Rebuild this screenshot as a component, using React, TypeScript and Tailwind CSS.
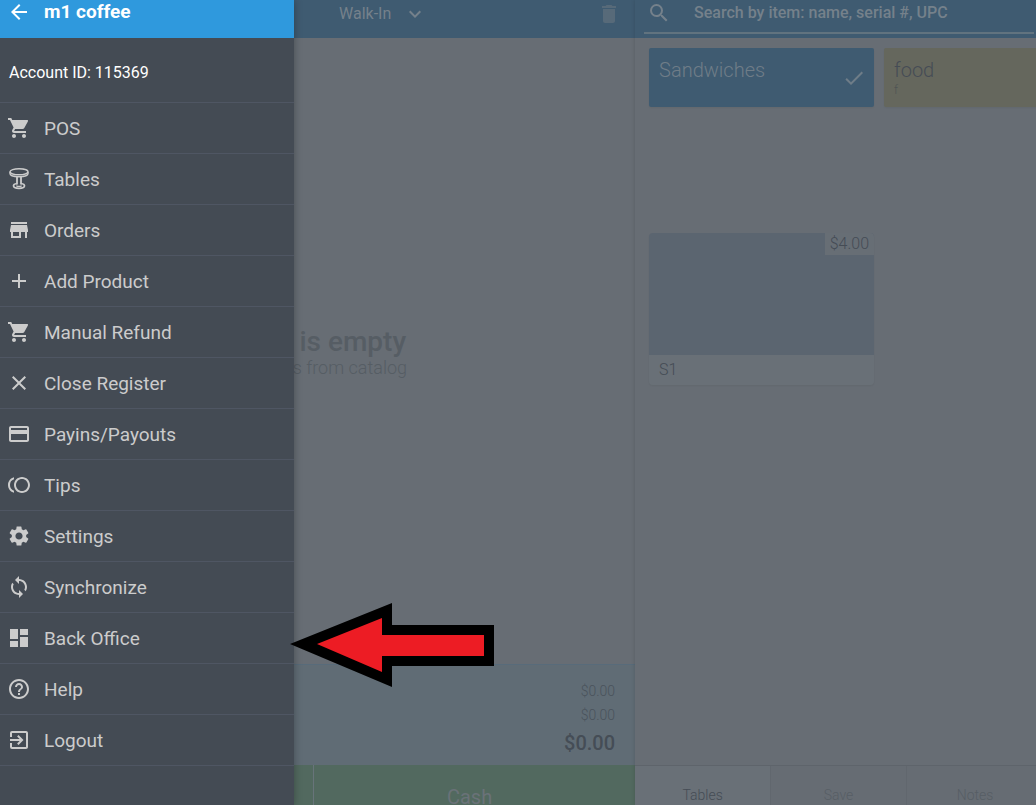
import type { ReactNode } from "react";
import type { IconType } from "react-icons";
import {
  MdAdd,
  MdArrowBack,
  MdCheck,
  MdClose,
  MdCreditCard,
  MdDashboard,
  MdDelete,
  MdExitToApp,
  MdHelpOutline,
  MdKeyboardArrowDown,
  MdSearch,
  MdSettings,
  MdShoppingCart,
  MdStore,
  MdSync,
  MdToll,
} from "react-icons/md";

function TableIcon() {
  return (
    <svg width="24" height="24" viewBox="0 0 24 24" fill="none" stroke="currentColor">
      <ellipse cx="12" cy="4.7" rx="9" ry="3" strokeWidth="1.4" />
      <path d="M3 4.7v2c0 1.700 4 3 9 3s9-1.300 9-3v-2" strokeWidth="1.4" />
      <path d="M10 9.500v8M14 9.500v8" strokeWidth="1.800" />
      <path d="M10 16.500c-2.300.3-3.500 1-3.500 2.300 0 1.500 2.400 2.500 5.500 2.500s5.500-1 5.500-2.500c0-1.300-1.200-2-3.500-2.300" strokeWidth="1.700" />
      <path d="M9.300 18.800c1.600.7 3.800.7 5.400 0" strokeWidth="1.300" />
    </svg>
  );
}

const icon = (Icon: IconType) => <Icon size={24} />;

const menuItems: { label: string; icon: ReactNode }[] = [
  { label: "POS", icon: icon(MdShoppingCart) },
  { label: "Tables", icon: <TableIcon /> },
  { label: "Orders", icon: icon(MdStore) },
  { label: "Add Product", icon: icon(MdAdd) },
  { label: "Manual Refund", icon: icon(MdShoppingCart) },
  { label: "Close Register", icon: icon(MdClose) },
  { label: "Payins/Payouts", icon: icon(MdCreditCard) },
  { label: "Tips", icon: icon(MdToll) },
  { label: "Settings", icon: icon(MdSettings) },
  { label: "Synchronize", icon: icon(MdSync) },
  { label: "Back Office", icon: icon(MdDashboard) },
  { label: "Help", icon: icon(MdHelpOutline) },
  { label: "Logout", icon: icon(MdExitToApp) },
];

function Drawer() {
  return (
    <aside className="absolute inset-y-0 left-0 z-20 w-[294px] bg-[#444b54] shadow-[0_0_8px_rgba(0,0,0,0.3)]">
      <header className="flex h-[38px] items-center bg-[#2f99dd] pb-3.5 pl-[7px] text-white">
        <button aria-label="Back" className="mr-[13px]">
          <MdArrowBack size={24} />
        </button>
        <h1 className="text-[19px] leading-6 font-bold">m1 coffee</h1>
      </header>
      <p className="flex h-[65px] items-center border-b border-[#4f5663] pt-1.5 pl-[9px] text-base text-white">
        Account ID: 115369
      </p>
      <nav>
        {menuItems.map((item) => (
          <a
            key={item.label}
            href="#"
            className="flex h-[51px] items-center gap-[13px] border-b border-[#4f5663] pl-[7px] text-[19px] text-[#cccccc]"
          >
            {item.icon}
            <span className="pt-0.5">{item.label}</span>
          </a>
        ))}
      </nav>
    </aside>
  );
}

function Cart() {
  return (
    <section className="flex w-[61.3%] shrink-0 flex-col">
      <header className="flex h-[38px] items-center justify-between bg-[#3f5b71] pr-3.5 pb-2.5 pl-[339px] text-[#75818b]">
        <button className="flex items-center gap-3 text-base">
          Walk-In
          <MdKeyboardArrowDown size={24} />
        </button>
        <button aria-label="Clear cart" className="text-[#576a79]">
          <MdDelete size={24} />
        </button>
      </header>
      <div className="flex flex-1 flex-col items-center justify-center pt-0.5 pr-1.5 text-[#565d64]">
        <p className="text-[28px] leading-8 font-medium">Order is empty</p>
        <p className="text-lg leading-5 font-light">Add items from catalog</p>
      </div>
      <div className="flex h-[101px] flex-col items-end border-t border-[#586b7a] bg-[#606c75] pt-3.5 pr-5 text-[#4a535c]">
        <p className="text-sm leading-6 font-light">$0.00</p>
        <p className="text-sm leading-6 font-light">$0.00</p>
        <p className="text-xl leading-8 font-medium text-[#454d56]">$0.00</p>
      </div>
      <div className="flex h-10 bg-[#52695f] text-xl text-[#6a7278]">
        <button className="w-[314px] shrink-0 border-r border-[#68747a]" aria-label="Card" />
        <button className="flex flex-1 items-end justify-center pr-2.5 leading-4">Cash</button>
      </div>
    </section>
  );
}

function Catalog() {
  return (
    <section className="z-10 flex min-w-0 flex-1 flex-col overflow-hidden shadow-[0_0_4px_rgba(0,0,0,0.15)]">
      <header className="h-[38px] shrink-0 bg-[#3f5b71] pr-0.5 pl-[9px]">
        <label className="flex h-[34px] items-center gap-[23px] border-b-2 border-[#61737f] pb-1.5 pl-[3px] text-[#75818b]">
          <MdSearch size={24} className="shrink-0" />
          <input
            type="text"
            aria-label="Search"
            placeholder="Search by item: name, serial #, UPC"
            className="min-w-0 flex-1 text-base font-medium outline-none placeholder:text-[#75818b]"
          />
        </label>
      </header>
      <div className="flex-1 bg-[#676d74] pt-2.5 pl-3.5">
        <div className="flex h-[185px] items-start gap-2.5">
          <button className="flex h-[59px] w-[225px] shrink-0 items-center justify-between rounded-xs bg-[#3f5b71] pr-2 pl-2.5 text-left text-[#6f7d88] shadow-xs">
            <span className="self-start pt-2 text-xl font-light">Sandwiches</span>
            <MdCheck size={24} />
          </button>
          <button className="flex h-[59px] w-[225px] shrink-0 flex-col rounded-xs bg-[#65675d] px-2.5 pt-2 text-left text-[#454c55] shadow-xs">
            <span className="text-xl font-light">food</span>
            <span className="text-xs leading-3 font-light text-[#4f5454]">f</span>
          </button>
        </div>
        <button className="block w-[225px] overflow-hidden rounded text-left font-light text-[#454c55] shadow-xs">
          <span className="flex h-[122px] items-start justify-end bg-[#5b6570]">
            <span className="bg-[#676e75] px-[5px] text-base leading-[22px]">$4.00</span>
          </span>
          <span className="block bg-[#697077] px-2.5 text-base leading-[30px]">S1</span>
        </button>
      </div>
      <footer className="flex h-10 shrink-0 overflow-hidden border-t border-[#5e646b] bg-[#666c73] text-sm font-light text-[#575e65]">
        <button className="flex w-[136px] shrink-0 justify-center border-r border-[#61676e] bg-[#697077] pt-[19px] text-[#454c55]">
          Tables
        </button>
        <button className="flex w-[136px] shrink-0 justify-center border-r border-[#61676e] pt-[19px]">Save</button>
        <button className="flex w-[136px] shrink-0 justify-center pt-[19px]">Notes</button>
      </footer>
    </section>
  );
}

export default function App() {
  return (
    <main className="relative flex h-screen overflow-hidden bg-[#676d74] font-[Roboto,sans-serif]">
      <Drawer />
      <Cart />
      <Catalog />
      <svg
        className="absolute top-[603px] left-[290px] z-30"
        width="205"
        height="84"
        viewBox="0 0 205 84"
        aria-hidden="true"
      >
        <path d="M0 41 102 0V22H204V63H102V84Z" fill="#000" />
        <path d="M27 41 92 15V32H194V53H92V69Z" fill="#ed1c24" />
      </svg>
    </main>
  );
}
